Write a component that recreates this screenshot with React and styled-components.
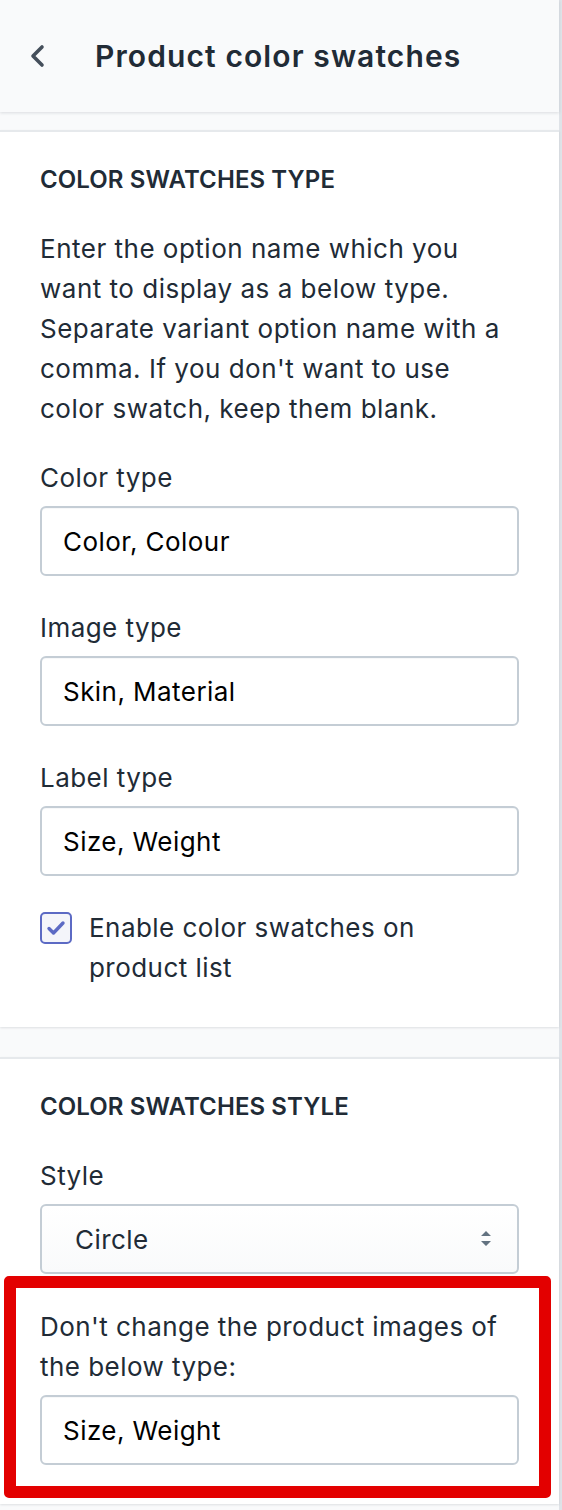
import styled, { createGlobalStyle } from "styled-components";

const ink = "#212b36";
const fieldBorder = "#c4cdd5";
const indigo = "#5c6ac4";

const GlobalStyle = createGlobalStyle`
  body {
    margin: 0;
    background: #f9fafb;
    font-family: Inter, "Noto Sans", sans-serif;
    color: ${ink};
  }
`;

const Panel = styled.div`
  width: 562px;
  min-height: 1510px;
  box-sizing: border-box;
  border-right: 3px solid #dfe3e8;
  background: #f9fafb;
`;

const Header = styled.header`
  height: 112px;
  display: flex;
  align-items: center;
  padding-left: 29px;
  gap: 50px;
  background: #f9fafb;
  box-shadow: 0 1px 3px rgba(33, 43, 54, 0.14);
  position: relative;
`;

const Title = styled.h1`
  margin: 0;
  font-size: 30px;
  font-weight: 600;
  letter-spacing: 1.1px;
  color: ${ink};
`;

const Card = styled.section`
  background: #fff;
  border-top: 2px solid #e6e9ec;
  padding: 32px 40px 39px;
  margin-top: ${(props) => props.$gap || "18px"};
  box-shadow: 0 1px 2px rgba(33, 43, 54, 0.12);
`;

const Heading = styled.h2`
  margin: 0 0 33px;
  font-size: 24px;
  line-height: 32px;
  font-weight: 600;
  letter-spacing: 0.1px;
  text-transform: uppercase;
  color: ${ink};
`;

const Text = styled.p`
  margin: 0;
  font-size: 26px;
  line-height: 40px;
  letter-spacing: 0.5px;
  color: ${ink};
`;

const Field = styled.div`
  margin-top: ${(props) => props.$top || "32px"};
  position: relative;

  ${(props) =>
    props.$marked &&
    `
    &::after {
      content: "";
      position: absolute;
      top: -31px;
      left: -36px;
      right: -32px;
      bottom: -33px;
      border: 12px solid #e30000;
      border-radius: 5px;
      pointer-events: none;
    }
  `}
`;

const Label = styled.label`
  display: block;
  font-size: 26px;
  line-height: 40px;
  letter-spacing: 0.45px;
  margin-bottom: 8px;
  color: ${ink};
`;

const Input = styled.input`
  display: block;
  width: 100%;
  height: 70px;
  box-sizing: border-box;
  border: 2px solid ${fieldBorder};
  border-radius: 6px;
  padding: 0 21px;
  margin: 0;
  font-family: inherit;
  font-size: 26px;
  letter-spacing: 0.45px;
  color: #000;
  background: #fff;
  box-shadow: inset 0 1px 0 rgba(99, 115, 129, 0.05);
`;

const SelectBox = styled.div`
  height: 70px;
  box-sizing: border-box;
  border: 2px solid ${fieldBorder};
  border-radius: 6px;
  display: flex;
  align-items: center;
  justify-content: space-between;
  padding: 0 26px 0 33px;
  font-size: 26px;
  letter-spacing: 0.45px;
  color: ${ink};
  background: linear-gradient(#fff, #f9fafb);
`;

const CheckRow = styled.label`
  display: flex;
  align-items: flex-start;
  gap: 17px;
  margin-top: 32px;
  font-size: 26px;
  line-height: 40px;
  letter-spacing: 0.45px;
  color: ${ink};
`;

const CheckBox = styled.span`
  flex: none;
  width: 32px;
  height: 32px;
  margin-top: 4px;
  box-sizing: border-box;
  border: 2px solid ${indigo};
  border-radius: 5px;
  background: #f4f5fa;
  display: flex;
  align-items: center;
  justify-content: center;
`;

const Chevron = () => (
  <svg width="16" height="24" viewBox="0 0 16 24">
    <polyline
      points="13,3 4,12 13,21"
      fill="none"
      stroke="#454f5b"
      strokeWidth="3.6"
      strokeLinecap="round"
      strokeLinejoin="round"
    />
  </svg>
);

const Arrows = () => (
  <svg width="10" height="16" viewBox="0 0 10 16">
    <path d="M5 0 L10 5 H0 Z M0 10 H10 L5 15 Z" fill="#637381" />
  </svg>
);

const Check = () => (
  <svg width="20" height="16" viewBox="0 0 20 16">
    <polyline
      points="3,8.5 7.5,13 17,3"
      fill="none"
      stroke={indigo}
      strokeWidth="3.4"
      strokeLinecap="round"
      strokeLinejoin="round"
    />
  </svg>
);

const TextField = ({ label, value, top, marked }) => (
  <Field $top={top} $marked={marked}>
    <Label>{label}</Label>
    <Input defaultValue={value} />
  </Field>
);

export default function App() {
  return (
    <>
      <GlobalStyle />
      <Panel>
        <Header>
          <Chevron />
          <Title>Product color swatches</Title>
        </Header>

        <Card>
          <Heading>Color swatches type</Heading>
          <Text>
            Enter the option name which you want to display as a below type.
            Separate variant option name with a comma. If you don't want to use
            color swatch, keep them blank.
          </Text>
          <TextField label="Color type" value="Color, Colour" top="29px" />
          <TextField label="Image type" value="Skin, Material" />
          <TextField label="Label type" value="Size, Weight" />
          <CheckRow>
            <CheckBox>
              <Check />
            </CheckBox>
            <span>Enable color swatches on product list</span>
          </CheckRow>
        </Card>

        <Card $gap="30px">
          <Heading>Color swatches style</Heading>
          <Field $top="0">
            <Label>Style</Label>
            <SelectBox>
              <span>Circle</span>
              <Arrows />
            </SelectBox>
          </Field>
          <TextField
            label="Don't change the product images of the below type:"
            value="Size, Weight"
            top="33px"
            marked
          />
        </Card>
      </Panel>
    </>
  );
}
